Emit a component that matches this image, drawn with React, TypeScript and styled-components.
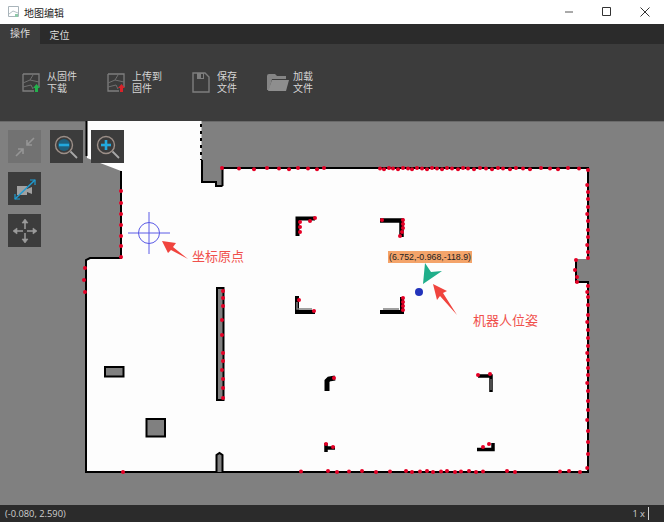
import React from 'react';
import styled, { createGlobalStyle } from 'styled-components';

const GlobalStyle = createGlobalStyle`
  html, body {
    margin: 0;
    padding: 0;
    background: #808080;
  }
  body {
    font-family: 'Liberation Sans', 'Noto Sans CJK SC', sans-serif;
  }
`;

const Page = styled.div`
  width: 664px;
  height: 522px;
  display: flex;
  flex-direction: column;
  overflow: hidden;
`;

const TitleBar = styled.div`
  height: 24px;
  flex: none;
  display: flex;
  align-items: center;
  padding-left: 8px;
  background: #ffffff;
`;
const Title = styled.span`
  margin-left: 5px;
  font-size: 10px;
  color: #222222;
`;
const WindowButtons = styled.div`
  margin-left: auto;
  display: flex;
`;
const WindowButton = styled.div`
  width: 38px;
  height: 24px;
  display: flex;
  align-items: center;
  justify-content: center;
`;

const TabBar = styled.div`
  height: 20px;
  flex: none;
  display: flex;
  background: #2b2b2b;
`;
const Tab = styled.div<{ $active?: boolean }>`
  width: ${(p) => (p.$active ? '40px' : '39px')};
  display: flex;
  align-items: ${(p) => (p.$active ? 'flex-start' : 'center')};
  justify-content: center;
  padding-top: 3px;
  box-sizing: border-box;
  font-size: 10px;
  line-height: 14px;
  color: #dddddd;
  background: ${(p) => (p.$active ? '#3c3c3c' : 'transparent')};
`;

const Ribbon = styled.div`
  height: 77px;
  flex: none;
  display: flex;
  align-items: center;
  gap: 30px;
  padding-left: 22px;
  background: #3c3c3c;
`;
const RibbonAction = styled.div<{ $gap: number }>`
  display: flex;
  align-items: center;
  gap: ${(p) => p.$gap}px;
`;
const ActionLabel = styled.div`
  font-size: 10px;
  line-height: 12px;
  color: #d6d6d6;
`;

const MapArea = styled.div`
  position: relative;
  flex: 1;
  background: #808080;
  border-top: 1px solid #6a6a6a;
  box-sizing: border-box;
`;
const MapCanvas = styled.svg`
  display: block;
  position: absolute;
  left: 0;
  top: -1px;
`;
const ToolGrid = styled.div`
  position: absolute;
  left: 8px;
  top: 8px;
  display: grid;
  grid-template-columns: repeat(3, 33px);
  grid-auto-rows: 33px;
  gap: 9px 8.5px;
`;
const ToolButton = styled.div<{ $disabled?: boolean; $row?: number }>`
  display: flex;
  align-items: center;
  justify-content: center;
  background: ${(p) => (p.$disabled ? '#727272' : '#3c3c3c')};
  grid-column: ${(p) => (p.$row ? 1 : 'auto')};
`;
const Annotation = styled.div<{ $x: number; $y: number }>`
  position: absolute;
  left: ${(p) => p.$x}px;
  top: ${(p) => p.$y}px;
  font-size: 13px;
  line-height: 16px;
  color: #f0504c;
  white-space: nowrap;
`;
const PoseTag = styled.div`
  position: absolute;
  left: 388px;
  top: 129px;
  height: 12px;
  padding: 0 1px;
  background: #f4a46a;
  font-size: 8.8px;
  line-height: 12px;
  color: #222222;
  white-space: nowrap;
`;

const StatusBar = styled.div`
  height: 17px;
  flex: none;
  display: flex;
  align-items: center;
  padding: 0 15px 0 5px;
  background: #2b2b2b;
  font-family: 'Open Sans', 'Liberation Sans', sans-serif;
  font-size: 9.300px;
  color: #cfcfcf;
`;
const Zoom = styled.span`
  margin-left: auto;
  padding-right: 3px;
  border-right: 1px solid #d0d0d0;
  line-height: 13px;
`;

const FirmwareIcon = ({ badge }: { badge: string }) => (
  <svg width="18" height="21" viewBox="0 0 18 21" fill="none">
    <path d="M1 2h16v13M12 19H1V2" stroke="#7e7e7e" strokeWidth="1.300" />
    <path d="M1 11l7-3 3-5M8 8l9 2M1 15l8-2 2 4" stroke="#707070" strokeWidth="1" />
    <path d="M14.500 12l3.500 4h-2v4h-3v-4h-2z" fill={badge} />
  </svg>
);

const SaveIcon = () => (
  <svg width="18" height="21" viewBox="0 0 18 21" fill="none">
    <path d="M1 1h12l4 4v15H1z" stroke="#7e7e7e" strokeWidth="1.400" />
    <path d="M5 1h7v6H5z" fill="#7e7e7e" />
    <path d="M9 2h2v4H9z" fill="#3c3c3c" />
  </svg>
);

const FolderIcon = () => (
  <svg width="22" height="19" viewBox="0 0 22 19">
    <path d="M0 3q0-2 2-2h6l2 2h9v3H5L2 17H0z" fill="#858585" />
    <path d="M5 7h17l-3 11H1z" fill="#8e8e8e" />
  </svg>
);

const ShrinkIcon = () => (
  <svg width="24" height="24" viewBox="0 0 24 24" fill="none" stroke="#959595" strokeWidth="1.600">
    <path d="M21 3l-7 7M14 5v5h5M3 21l7-7M5 14h5v5" />
  </svg>
);

const MagnifierIcon = ({ plus }: { plus?: boolean }) => (
  <svg width="28" height="28" viewBox="0 0 28 28" fill="none">
    <circle cx="12" cy="12" r="8.500" stroke="#9c8f88" strokeWidth="1.400" />
    <circle cx="12" cy="12" r="6" fill={plus ? '#3c3c3c' : '#1f5f7c'} />
    <path d="M7 12h10" stroke="#22a8dd" strokeWidth="2.600" />
    {plus && <path d="M12 7v10" stroke="#22a8dd" strokeWidth="2.600" />}
    <path d="M18.500 18.500l6.500 6.500" stroke="#a8a8a8" strokeWidth="1.800" />
  </svg>
);

const CameraIcon = () => (
  <svg width="24" height="24" viewBox="0 0 24 24" fill="none">
    <path d="M4 9h10v9H4zM14 12l5-2v7l-5-2z" fill="#a0a0a0" />
    <path d="M2 22L22 3" stroke="#1f9bd1" strokeWidth="1.500" />
    <path d="M2 17v5h5M22 8V3h-5" stroke="#1f9bd1" strokeWidth="1.200" />
  </svg>
);

const MoveIcon = () => (
  <svg width="26" height="26" viewBox="0 0 26 26" fill="#9c9c9c" stroke="#9c9c9c" strokeWidth="1.500">
    <path d="M13 4v7M13 15v7M4 13h7M15 13h7" fill="none" />
    <path d="M10 5l3-4 3 4zM10 21l3 4 3-4zM5 10l-4 3 4 3zM21 10l4 3-4 3z" strokeWidth="0.600" />
  </svg>
);

const wallOutline =
  'M87 121 L201.500 121 L201.500 182 L216 182 L216 186 L222.500 186 L222.500 168 L588 168 L588 259 L576 259 L576 282 L588 282 L588 472 L86 472 L86 260 L90 258 L121 258 L121 171 L108 166 L87 158 Z';

const topDots = [
  222, 239, 254, 267, 279, 289, 298, 308, 317, 324, 380, 384, 389, 393, 398, 403, 408, 412, 417, 422, 427, 432,
  437, 442, 447, 452, 458, 463, 468, 474, 480, 486, 492, 498, 503, 510, 516, 523, 530, 541, 550, 558, 568, 579,
];
const rightDots = [
  170, 185, 192, 199, 207, 214, 221, 230, 237, 245, 252, 258, 286, 292, 297, 305, 315, 322, 330, 338, 346, 353, 360,
  368, 375, 383, 391, 401, 410, 420, 431, 442, 454, 468,
];
const bottomDots = [
  123, 301, 328, 337, 349, 362, 376, 390, 406, 412, 420, 427, 433, 441, 447, 455, 461, 469, 476, 483, 507, 515, 560,
  569, 580,
];
const otherDots: [number, number][] = [
  [121, 191], [121, 203], [121, 214], [121, 225], [121, 236], [121, 246], [121, 257],
  [85, 268], [84, 280], [85, 292],
  [576, 260], [575, 270], [577, 277], [577, 282],
  [223, 291], [223, 298], [223, 306], [222, 320], [222, 335], [223, 353], [223, 361], [222, 370], [223, 379], [223, 388], [223, 398],
  [315, 218], [310, 221], [300, 222], [300, 227], [300, 232],
  [382, 220], [403, 220], [403, 224], [403, 228], [402, 232], [400, 236],
  [314, 311], [403, 298], [403, 302], [403, 306], [403, 310], [299, 300],
  [334, 378], [326, 444], [333, 447], [478, 375], [490, 374], [489, 444], [483, 447],
];

const WallBlock = styled.rect`
  fill: #808080;
  stroke: #000000;
  stroke-width: 2;
`;

const MapDrawing = () => (
  <MapCanvas width="664" height="384" viewBox="0 121 664 384">
    <path d={wallOutline} fill="#fdfdfd" />
    <path
      d="M222.500 186 V168 H588 V259 M576 259 V282 H588 V472 H86 V260 L90 258 H121 V171 M86.500 121 V156"
      fill="none"
      stroke="#000000"
      strokeWidth="2"
    />
    <path d="M202 160 V182 H216 V186 H222.500" fill="none" stroke="#000000" strokeWidth="2" />
    <path d="M201 124 V160" fill="none" stroke="#000000" strokeWidth="2" strokeDasharray="3 4" />

    <WallBlock x="217" y="288" width="6.500" height="112" />
    <WallBlock x="105" y="367" width="18.500" height="9.500" />
    <WallBlock x="146.500" y="419" width="18.500" height="17.500" />
    <path d="M216.500 472 V455 L219.500 453 L222.500 455 V472" fill="#808080" stroke="#000000" strokeWidth="2" />

    {/* corner pillars */}
    <path d="M315 218.500 H297.500 V236" fill="none" stroke="#000000" strokeWidth="4" />
    <path d="M380 220.500 H401.500 V237" fill="none" stroke="#000000" strokeWidth="4.500" />
    <path d="M297 296 V312 H315" fill="none" stroke="#000000" strokeWidth="4" />
    <path d="M297 302 V309 H312" fill="none" stroke="#808080" strokeWidth="1.500" />
    <path d="M380 312 H402 V297" fill="none" stroke="#000000" strokeWidth="4" />
    <path d="M383 309 H399" fill="none" stroke="#808080" strokeWidth="1.500" />
    <path d="M335 378 L329 379 L327 381 V391" fill="none" stroke="#000000" strokeWidth="5" />
    <path d="M478 376 H491 V392" fill="none" stroke="#000000" strokeWidth="3.500" />
    <path d="M491 379 V390" fill="none" stroke="#808080" strokeWidth="1.200" />
    <path d="M326 443 V452 M326 448 H335" fill="none" stroke="#000000" strokeWidth="3.500" />
    <path d="M477 449.500 H493 V443" fill="none" stroke="#000000" strokeWidth="3.500" />

    {topDots.map((x, i) => (
      <circle key={`t${x}`} cx={x} cy={168 + (i % 3) * 0.6} r="2" fill="#e60026" />
    ))}
    {rightDots.map((y, i) => (
      <circle key={`r${y}`} cx={588 - (i % 4 === 1 ? 0.8 : 0)} cy={y} r="2" fill="#e60026" />
    ))}
    {bottomDots.map((x, i) => (
      <circle key={`b${x}`} cx={x} cy={472 - (i % 3) * 0.5} r="2" fill="#e60026" />
    ))}
    {otherDots.map(([x, y]) => (
      <circle key={`o${x}-${y}`} cx={x} cy={y} r="2" fill="#e60026" />
    ))}

    {/* origin marker */}
    <circle cx="149" cy="233" r="10.500" fill="none" stroke="#5a5ae6" strokeWidth="1" />
    <path d="M128 233 H170 M149 212 V254" stroke="#5a5ae6" strokeWidth="1" />
    <path d="M162 241 L176 243 L173 247 L188 259 L171 250 L168 253 Z" fill="#f0443e" />

    {/* robot pose */}
    <path d="M425 263 L431 272 L442 271 L423 284 Z" fill="#1fae8a" />
    <circle cx="419" cy="292" r="4" fill="#2233bb" />
    <path d="M433 284 L447 291 L443 293 L457 315 L440 296 L437 300 Z" fill="#f0443e" />
  </MapCanvas>
);

const App = () => (
  <Page>
    <GlobalStyle />
    <TitleBar>
      <svg width="11" height="12" viewBox="0 0 11 12" fill="none">
        <path d="M.5.500h10v10H.5z" stroke="#a9b4ba" />
        <path d="M1 8l4-3 5 2" stroke="#b5bfc4" />
        <path d="M7 8h3v3H7z" fill="#8fc9a8" />
      </svg>
      <Title>地图编辑</Title>
      <WindowButtons>
        <WindowButton>
          <svg width="10" height="10" viewBox="0 0 10 10">
            <path d="M1 5h8" stroke="#555555" />
          </svg>
        </WindowButton>
        <WindowButton>
          <svg width="10" height="10" viewBox="0 0 10 10" fill="none">
            <path d="M.5.500h8v8h-8z" stroke="#333333" />
          </svg>
        </WindowButton>
        <WindowButton>
          <svg width="10" height="10" viewBox="0 0 10 10">
            <path d="M.5.500l9 9M9.500.500l-9 9" stroke="#333333" />
          </svg>
        </WindowButton>
      </WindowButtons>
    </TitleBar>

    <TabBar>
      <Tab $active>操作</Tab>
      <Tab>定位</Tab>
    </TabBar>

    <Ribbon>
      <RibbonAction $gap={7}>
        <FirmwareIcon badge="#22b14c" />
        <ActionLabel>
          从固件
          <br />
          下载
        </ActionLabel>
      </RibbonAction>
      <RibbonAction $gap={7}>
        <FirmwareIcon badge="#d8232a" />
        <ActionLabel>
          上传到
          <br />
          固件
        </ActionLabel>
      </RibbonAction>
      <RibbonAction $gap={7}>
        <SaveIcon />
        <ActionLabel>
          保存
          <br />
          文件
        </ActionLabel>
      </RibbonAction>
      <RibbonAction $gap={4}>
        <FolderIcon />
        <ActionLabel>
          加载
          <br />
          文件
        </ActionLabel>
      </RibbonAction>
    </Ribbon>

    <MapArea>
      <MapDrawing />
      <ToolGrid>
        <ToolButton $disabled>
          <ShrinkIcon />
        </ToolButton>
        <ToolButton>
          <MagnifierIcon />
        </ToolButton>
        <ToolButton>
          <MagnifierIcon plus />
        </ToolButton>
        <ToolButton $row={2}>
          <CameraIcon />
        </ToolButton>
        <ToolButton $row={3}>
          <MoveIcon />
        </ToolButton>
      </ToolGrid>
      <Annotation $x={192} $y={127}>
        坐标原点
      </Annotation>
      <PoseTag>(6.752,-0.968,-118.9)</PoseTag>
      <Annotation $x={473} $y={191}>
        机器人位姿
      </Annotation>
    </MapArea>

    <StatusBar>
      <span>(-0.080, 2.590)</span>
      <Zoom>1 x</Zoom>
    </StatusBar>
  </Page>
);

export default App;
